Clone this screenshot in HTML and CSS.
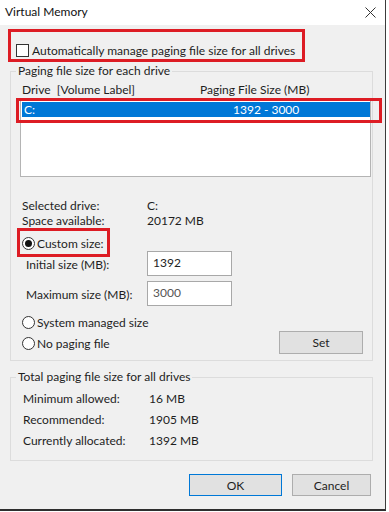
FILE: index.html
```html
<!DOCTYPE html>
<html>
<head>
<meta charset="utf-8">
<title>Virtual Memory</title>
<link rel="stylesheet" href="styles.css">
</head>
<body>
<div class="window">
  <div class="titlebar">
    <span class="title">Virtual Memory</span>
    <svg class="close" width="11" height="11" viewBox="0 0 11 11"><path d="M0.5 0.5 L10.5 10.5 M10.5 0.5 L0.5 10.5" stroke="#333" stroke-width="1" fill="none"/></svg>
  </div>
  <div class="content">
    <div class="mark mark-auto">
      <div class="check-row"><span class="checkbox"></span><span>Automatically manage paging file size for all drives</span></div>
    </div>

    <fieldset class="group group-drive">
      <legend>Paging file size for each drive</legend>
      <div class="cols"><span class="col-a">Drive&nbsp; [Volume Label]</span><span>Paging File Size (MB)</span></div>
      <div class="listbox">
        <div class="list-row selected"><span class="cell-a">C:</span><span>1392 - 3000</span></div>
        <div class="mark mark-row"></div>
      </div>
      <div class="info">
        <div class="info-row"><span class="key">Selected drive:</span><span>C:</span></div>
        <div class="info-row"><span class="key">Space available:</span><span>20172 MB</span></div>
      </div>
      <div class="mark mark-custom"><span class="radio checked"></span><span>Custom size:</span></div>
      <div class="field"><span class="field-label">Initial size (MB):</span><span class="input">1392</span></div>
      <div class="field field-second"><span class="field-label">Maximum size (MB):</span><span class="input dim">3000</span></div>
      <div class="bottom-row">
        <div class="radios">
          <div class="radio-row"><span class="radio"></span><span>System managed size</span></div>
          <div class="radio-row"><span class="radio"></span><span>No paging file</span></div>
        </div>
        <button class="btn btn-set">Set</button>
      </div>
    </fieldset>

    <fieldset class="group group-total">
      <legend>Total paging file size for all drives</legend>
      <div class="totals">
        <div class="total-row"><span class="tkey">Minimum allowed:</span><span>16 MB</span></div>
        <div class="total-row"><span class="tkey">Recommended:</span><span>1905 MB</span></div>
        <div class="total-row"><span class="tkey">Currently allocated:</span><span>1392 MB</span></div>
      </div>
    </fieldset>

    <div class="actions">
      <button class="btn btn-ok">OK</button>
      <button class="btn btn-cancel">Cancel</button>
    </div>
  </div>
</div>
</body>
</html>
```
FILE: styles.css
```css
* { box-sizing: border-box; }
html, body { margin: 0; padding: 0; background: #ffffff; }
body {
  font-family: Lato, "Noto Sans", sans-serif;
  font-size: 12px;
  color: #1e1e1e;
  width: 389px;
  height: 512px;
  overflow: hidden;
}
.window {
  width: 386px;
  height: 511px;
  border-right: 1px solid #3c3c3c;
  border-bottom: 2px solid #2e2e2e;
  background: #f0f0f0;
  display: flex;
  flex-direction: column;
}
.titlebar {
  height: 25px;
  background: #ffffff;
  display: flex;
  align-items: center;
  justify-content: space-between;
  padding: 0 9px 1px 5px;
}
.title { line-height: 16px; color: #111; }
.close { display: block; }
.content {
  flex: 1;
  display: flex;
  flex-direction: column;
  align-items: flex-start;
}
.mark { border: 3px solid #dd1c24; }
.mark-auto {
  margin: 4px 0 0 8px;
  width: 297px;
  height: 33px;
  padding: 12px 0 0 5px;
}
.check-row {
  display: flex;
  align-items: center;
  gap: 3px;
  height: 13px;
  line-height: 13px;
  white-space: nowrap;
}
.checkbox {
  width: 13px;
  height: 13px;
  border: 1px solid #333;
  background: #fff;
  flex: none;
}
.group {
  margin: 0 0 0 10px;
  width: 363px;
  border: 1px solid #dcdcdc;
  padding: 0;
  min-width: 0;
}
.group legend {
  margin-left: 5px;
  padding: 0 2px;
  line-height: 16px;
  color: #1e1e1e;
}
.group-drive { margin-top: 1px; padding-bottom: 6px; }
.cols {
  margin: 3px 0 0 11px;
  height: 16px;
  line-height: 16px;
  display: flex;
  white-space: nowrap;
}
.col-a { width: 178px; }
.listbox {
  position: relative;
  margin: 2px 0 0 9px;
  width: 351px;
  height: 77px;
  border: 1px solid #b4b4b4;
  background: #fff;
}
.list-row {
  margin: 1px 0 0 1px;
  height: 15px;
  line-height: 15px;
  padding-left: 2px;
  display: flex;
  white-space: nowrap;
}
.selected { background: #0078d7; color: #fff; }
.cell-a { width: 209px; }
.mark-row {
  position: absolute;
  left: -5px;
  top: -3px;
  width: 366px;
  height: 25px;
}
.info { margin: 21px 0 0 11px; }
.info-row { display: flex; height: 15px; line-height: 15px; }
.key { width: 125px; }
.mark-custom {
  margin: 0 0 -6px 6px;
  width: 93px;
  height: 29px;
  padding: 2px 0 0 2px;
  display: flex;
  align-items: center;
  gap: 2px;
  white-space: nowrap;
}
.radio {
  width: 13px;
  height: 13px;
  border: 1px solid #333;
  border-radius: 50%;
  background: #fff;
  flex: none;
  display: flex;
  align-items: center;
  justify-content: center;
}
.radio.checked::after {
  content: "";
  width: 7px;
  height: 7px;
  border-radius: 50%;
  background: #111;
}
.field {
  display: flex;
  align-items: center;
  height: 25px;
  margin-left: 15px;
  white-space: nowrap;
}
.field-second { margin-top: 5px; }
.field-label { width: 121px; padding-top: 2px; }
.input {
  width: 85px;
  height: 25px;
  border: 1px solid #a8a8a8;
  background: #fff;
  padding-left: 5px;
  line-height: 21px;
  color: #222;
}
.input.dim { color: #555; }
.bottom-row {
  margin-top: 6px;
  display: flex;
  justify-content: space-between;
  align-items: flex-end;
}
.radios { margin-left: 11px; }
.radio-row {
  display: flex;
  align-items: center;
  gap: 2px;
  height: 21px;
  white-space: nowrap;
}
.btn {
  font: inherit;
  color: #1e1e1e;
  background: #e1e1e1;
  border: 1px solid #adadad;
  padding: 0;
  margin: 0;
  height: 22px;
}
.btn-set { width: 84px; height: 23px; margin-right: 9px; }
.group-total { margin-top: 8px; padding-bottom: 9px; }
.totals { margin: 3px 0 0 12px; }
.total-row { display: flex; height: 21px; line-height: 21px; }
.tkey { width: 126px; }
.actions {
  margin-top: 13px;
  align-self: stretch;
  display: flex;
  justify-content: flex-end;
  gap: 10px;
  padding-right: 14px;
}
.btn-ok { width: 93px; border-color: #0078d7; }
.btn-cancel { width: 79px; }
```
